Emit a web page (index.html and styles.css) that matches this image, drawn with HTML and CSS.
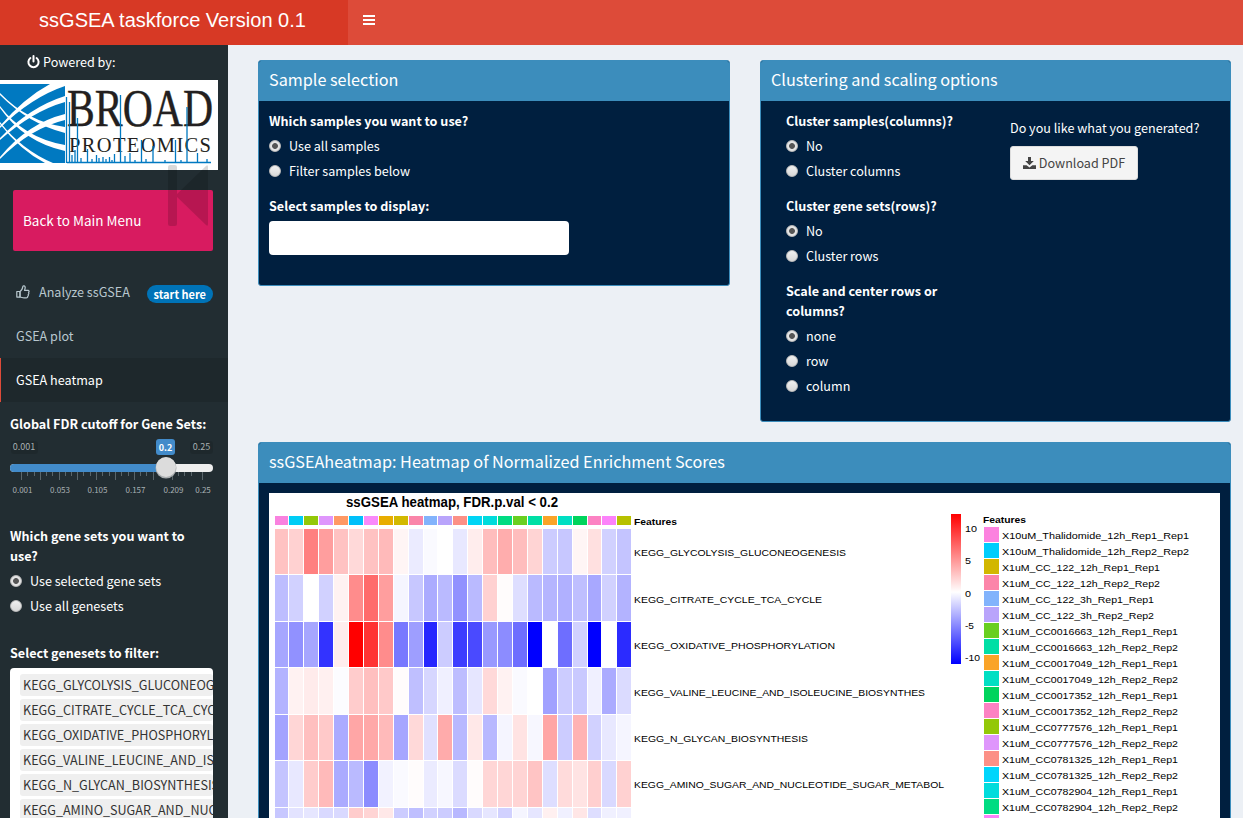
FILE: index.html
```html
<!DOCTYPE html>
<html lang="en">
<head>
<meta charset="utf-8">
<title>ssGSEA taskforce</title>
<link rel="stylesheet" href="styles.css">
</head>
<body>
<header class="header">
  <div class="brand">ssGSEA taskforce Version 0.1</div>
  <nav class="navbar"><svg class="bars" width="12" height="10" viewBox="0 0 12 10"><path d="M0 0h12v2H0zM0 4h12v2H0zM0 8h12v2H0z" fill="#fff"/></svg></nav>
</header>
<div class="shell">
  <aside class="sidebar">
    <div class="powered"><svg width="13" height="14" viewBox="0 0 13 14" fill="none" stroke="#fff" stroke-width="2" stroke-linecap="round"><path d="M3.4 3A5.1 5.1 0 1 0 9.6 3M6.5 1v5.4"/></svg><span>Powered by:</span></div>
    <svg class="logo" width="218" height="90" viewBox="0 0 218 90">
      <rect width="218" height="90" fill="#fff"/>
      <rect y="4" width="65" height="79" fill="#0079c1"/>
      <g fill="#fff">
        <path d="M0 46Q24 18 50 4H65V6Q32 17 0 48z"/>
        <path d="M0 58Q30 27 65 16V22Q33 31 0 60z"/>
        <path d="M0 77Q28 43 65 34V40Q31 48 0 79z"/>
        <path d="M0 13Q28 42 65 47V53Q29 44 0 15z"/>
        <path d="M0 26Q24 58 65 65V71Q24 62 0 28z"/>
        <path d="M0 42Q22 70 53 83H45Q20 70 0 44z"/>
      </g>
      <g font-family="'Liberation Serif', serif" fill="#231f20" stroke="#231f20" stroke-width=".4">
        <text x="67" y="46" font-size="53" textLength="146" lengthAdjust="spacingAndGlyphs">BROAD</text>
        <text x="69" y="72" font-size="20.5" stroke="none" textLength="142" lengthAdjust="spacing">PROTEOMICS</text>
      </g>
      <path d="M67 82.5H211M66.5 17V83M69.5 22V83M77.5 38V83M120.5 15V83M141.5 60V83M153 66V83M175.500 60V83M187 27V83M197.500 73V83M72 75V83M75 70V83M81 78V83M87.500 69V83M92 79V83M96.500 75V83M99 78V83M103 77V83M106 79V83M109.500 77V83M112 80V83M114.500 74V83M125 76V83M130 73V83M135 80V83M146 79V83M165 80V83M181 80V83M207 79V83" stroke="#0079c1" stroke-width="1.300" fill="none"/>
    </svg>
    <div class="back">Back to Main Menu
      <svg class="back-icon" width="40" height="61" viewBox="0 0 40 61"><path d="M0 2q0-2 2-2h5q2 0 2 2v27L38 1q2-2 2 1v57q0 3-2 1L9 32v27q0 2-2 2H2q-2 0-2-2z" fill="#000" fill-opacity=".15"/></svg>
    </div>
    <ul class="menu">
      <li><svg width="14" height="14" viewBox="0 0 14 14" fill="none" stroke="#b8c7ce" stroke-width="1.200" stroke-linejoin="round"><path d="M4 6.500C6 5.500 6.500 3.500 6.900 1.300 7.300.5 9.100.6 9.200 2.400 9.200 3.600 8.700 4.400 8.500 5.400H12c1.200 0 1.500 1.600.5 2.100.6.800.3 1.700-.3 2 .3.700.1 1.500-.5 1.700.1 1-.4 1.700-1.500 1.700H8C6.500 12.900 5.500 12.100 4 12z"/><path d="M.8 6.500H4v5.600H.8z"/></svg><span class="menu-text">Analyze ssGSEA</span><span class="badge">start here</span></li>
      <li>GSEA plot</li>
      <li class="active">GSEA heatmap</li>
    </ul>
    <div class="controls">
      <div class="label">Global FDR cutoff for Gene Sets:</div>
      <svg class="slider" width="203" height="60" viewBox="0 0 203 60">
        <rect x="1" y="5" width="27" height="13" rx="3" fill="#000" fill-opacity=".1"/><rect x="180" y="5" width="23" height="13" rx="3" fill="#000" fill-opacity=".1"/>
        <rect x="0" y="28" width="203" height="8" rx="4" fill="#eee"/>
        <path d="M4 28H156v8H4a4 4 0 0 1 0-8z" fill="#428bca"/>
        <path d="M11.500 36v8M30.500 36v8M49.500 36v8M67.500 36v8M86.500 36v8M105.500 36v8M124.500 36v8M143.500 36v8M162.500 36v8M192.500 36v8" stroke="#5a666b"/>
        <path d="M17.500 36v4M24.500 36v4M36.500 36v4M42.500 36v4M55.500 36v4M61.500 36v4M73.500 36v4M80.500 36v4M92.500 36v4M99.500 36v4M111.500 36v4M118.500 36v4M130.500 36v4M136.500 36v4M149.500 36v4M155.500 36v4M168.500 36v4M174.500 36v4M181.500 36v4" stroke="#5a666b"/>
        <circle cx="156" cy="32" r="10.500" fill="#a9adaf"/><circle cx="156" cy="31" r="10" fill="#dcdcdc"/>
        <rect x="146" y="3" width="19" height="16" rx="3" fill="#428bca"/>
        <g class="slider-text" text-anchor="middle">
          <text x="14" y="14">0.001</text><text x="191.500" y="14">0.25</text>
          <text class="slider-value" x="155.500" y="15">0.2</text>
        </g>
        <g class="slider-scale" text-anchor="middle">
          <text x="12.500" y="57">0.001</text><text x="50" y="57">0.053</text><text x="87.500" y="57">0.105</text><text x="125.500" y="57">0.157</text><text x="163.500" y="57">0.209</text><text x="193" y="57">0.25</text>
        </g>
      </svg>
      <div class="field genes">
        <div class="label">Which gene sets you want to use?</div>
        <label class="radio"><input type="radio" name="gs" checked>Use selected gene sets</label>
        <label class="radio"><input type="radio" name="gs">Use all genesets</label>
      </div>
      <div class="label">Select genesets to filter:</div>
      <div class="multi">
        <div class="item">KEGG_GLYCOLYSIS_GLUCONEOGENESIS</div>
        <div class="item">KEGG_CITRATE_CYCLE_TCA_CYCLE</div>
        <div class="item">KEGG_OXIDATIVE_PHOSPHORYLATION</div>
        <div class="item">KEGG_VALINE_LEUCINE_AND_ISOLEUCINE</div>
        <div class="item">KEGG_N_GLYCAN_BIOSYNTHESIS</div>
        <div class="item">KEGG_AMINO_SUGAR_AND_NUCLEOTIDE</div>
      </div>
    </div>
  </aside>
  <main class="content">
    <div class="row">
      <section class="box">
        <h3>Sample selection</h3>
        <div class="box-body samples">
          <div class="field">
            <div class="label">Which samples you want to use?</div>
            <label class="radio"><input type="radio" name="s" checked>Use all samples</label>
            <label class="radio"><input type="radio" name="s">Filter samples below</label>
          </div>
          <div class="label">Select samples to display:</div>
          <div class="input"></div>
        </div>
      </section>
      <section class="box">
        <h3>Clustering and scaling options</h3>
        <div class="box-body split">
          <div class="options">
            <div class="field">
              <div class="label">Cluster samples(columns)?</div>
              <label class="radio"><input type="radio" name="c" checked>No</label>
              <label class="radio"><input type="radio" name="c">Cluster columns</label>
            </div>
            <div class="field">
              <div class="label">Cluster gene sets(rows)?</div>
              <label class="radio"><input type="radio" name="r" checked>No</label>
              <label class="radio"><input type="radio" name="r">Cluster rows</label>
            </div>
            <div class="field">
              <div class="label">Scale and center rows or columns?</div>
              <label class="radio"><input type="radio" name="z" checked>none</label>
              <label class="radio"><input type="radio" name="z">row</label>
              <label class="radio"><input type="radio" name="z">column</label>
            </div>
          </div>
          <div class="download">
            <div>Do you like what you generated?</div>
            <button class="btn"><svg width="13" height="12" viewBox="0 0 13 12" fill="#444"><path d="M5 0h3v4h2.800L6.500 8.200 2.200 4H5z"/><path d="M0 8.300h3.600L6.500 10.500 9.400 8.300H13V12H0z"/></svg><span>Download PDF</span></button>
          </div>
        </div>
      </section>
    </div>
    <section class="box">
      <h3>ssGSEAheatmap: Heatmap of Normalized Enrichment Scores</h3>
      <div class="box-body"><svg class="plot" id="plot" width="951" height="325" viewBox="269 493 951 325"></svg></div>
    </section>
  </main>
</div>
<script src="heatmap.js"></script>
</body>
</html>
```
FILE: styles.css
```css
* { box-sizing: border-box; }
html, body { height: 818px; overflow: hidden; }
body { margin: 0; background: #ecf0f5; color: #fff; font: 12.6px/20px "Noto Sans CJK JP", "Noto Sans CJK SC", sans-serif; }
.header { display: flex; height: 45px; background: #dd4b39; }
.brand { width: 348px; padding-right: 3px; background: #d73925; font: 20px/40px "Liberation Sans", Arial, sans-serif; text-align: center; }
.navbar { padding: 15px; line-height: 0; }
.shell { display: flex; height: 773px; overflow: hidden; }
.sidebar { width: 228px; flex: none; background: #222d32; overflow: hidden; }
.powered { display: flex; align-items: center; gap: 3px; height: 35px; padding: 0 0 2px 27px; }
.logo { display: block; }
.back { position: relative; width: 200px; height: 61px; margin: 20px 0 19px 13px; padding-left: 10px; border-radius: 2px; background: #d81b60; font-size: 13.500px; line-height: 61px; }
.back-icon { position: absolute; right: 5px; top: -25px; }
.menu { list-style: none; margin: 0; padding: 0; color: #b8c7ce; }
.menu li { display: flex; align-items: center; height: 44px; padding-left: 15px; border-left: 1px solid transparent; }
.menu li.active { background: #1e282c; color: #fff; border-left-color: #dd4b39; }
.menu-text { margin-left: 9px; }
.badge { margin: 3px 15px 0 auto; padding: 0 7px; border-radius: 9px; background: #0073b7; color: #fff; font-size: 11px; line-height: 18px; font-weight: bold; }
.controls { padding: 12px 15px 0 10px; }
.label { font-weight: bold; }
.slider { display: block; margin-top: 2px; }
.slider-text, .slider-scale { fill: #a8b0b3; font-size: 9px; }
.slider-scale { font-size: 8px; }
.slider-value { fill: #fff; font-weight: bold; }
.field { display: flex; flex-direction: column; gap: 5px; margin-bottom: 15px; }
.genes { margin: 30px 0 27px; }
.radio { display: flex; align-items: center; gap: 8px; }
.radio input { appearance: none; width: 12px; height: 12px; margin: 0; border: 1px solid #bbb; border-radius: 50%; background: linear-gradient(#f0f0f0, #d8d8d8); }
.radio input:checked { background: radial-gradient(circle, #555 0 2.500px, #e4e4e4 3.300px); }
.multi { display: flex; flex-direction: column; gap: 3px; height: 200px; margin-top: 5px; padding: 6px 0 0 10px; border-radius: 4px; background: #fff; overflow: hidden; }
.item { flex: none; height: 22px; padding-left: 3px; border-radius: 3px; background: #efefef; color: #333; line-height: 22px; white-space: nowrap; }
.content { flex: 1; padding: 15px 12px 0 30px; }
.row { display: grid; grid-template-columns: 472px 471px; gap: 30px; align-items: start; margin-bottom: 20px; }
.box { border: 1px solid #3c8dbc; border-radius: 3px; background: #001f3f; overflow: hidden; }
.box h3 { margin: 0; height: 40px; padding-left: 10px; background: #3c8dbc; font-size: 16.200px; line-height: 36px; font-weight: normal; }
.box-body { padding: 10px; }
.samples { padding-bottom: 30px; }
.input { width: 300px; height: 34px; margin-top: 5px; border-radius: 4px; background: #fff; }
.split { display: flex; padding-left: 25px; }
.options { width: 172px; margin-right: 52px; }
.download { padding-top: 7px; white-space: nowrap; }
.btn { display: flex; align-items: center; justify-content: center; gap: 3px; width: 128px; height: 34px; margin-top: 8px; padding: 0; border: 1px solid #ddd; border-radius: 3px; background: #f4f4f4; color: #444; font: inherit; }
.plot { display: block; background: #fff; font-family: "Liberation Sans", Arial, sans-serif; font-size: 9.800px; }
.plot-title { font-size: 14px; font-weight: bold; }
.plot-heading { font-weight: bold; }
```
FILE: heatmap.js
```js
const NS = 'http://www.w3.org/2000/svg';
const plot = document.getElementById('plot');

function add(tag, attrs, text, parent = plot) {
  const el = document.createElementNS(NS, tag);
  for (const key in attrs) el.setAttribute(key, attrs[key]);
  if (text !== undefined) el.textContent = text;
  parent.appendChild(el);
  return el;
}
function label(x, y, text, width, cls = '') {
  add('text', { x, y, class: cls, textLength: width, lengthAdjust: 'spacingAndGlyphs' }, text);
}
function rect(x, y, width, height, fill) {
  add('rect', { x, y, width, height, fill });
}
// Positive scores shade to red, negative scores to blue.
function shade(v) {
  const c = Math.round(255 * (1 - Math.abs(v) / 100));
  return v >= 0 ? `rgb(255,${c},${c})` : `rgb(${c},${c},255)`;
}

const colX = [275,289,304,319,334,349,364,379,394,409,424,438,453,468,483,498,513,528,543,558,573,588,602,617,632];
const rowY = [529,575,622,668,715,761,808,854];
const features = ['#f982df','#00cdf5','#93c808','#df96fc','#ff9964','#00c0fa','#f98afa','#e8ad00','#d2b900','#fa85a9','#82b3fc','#b9a4fb','#fc9086','#00d5f5','#00dcdc','#00dc82','#69cf20','#00dfa5','#faa428','#00dfc3','#00d45d','#fc82c3','#fc82fa','#b7c100'];
const scores = [
  [24,18,50,38,24,15,24,27,4,-8,-2,0,-9,7,26,32,26,17,-20,-22,4,12,-18,-23],
  [-26,-18,0,-18,5,45,58,38,-4,-22,-33,-27,-43,-27,18,1,-13,-27,-29,-31,-25,-34,-18,-30],
  [-35,-43,-35,-80,7,100,80,45,-53,-38,-85,-20,-76,-71,-40,-45,-57,-100,0,-57,-18,-100,0,-83],
  [-30,5,8,6,-1,20,25,21,1,-25,-16,-6,-26,-10,15,5,-2,0,-37,-20,-21,-6,-33,-14],
  [-36,16,25,21,-33,35,34,27,-35,15,-12,33,-28,9,-28,-4,11,-3,35,-20,30,-18,-9,-4],
  [-23,-9,20,27,-33,-27,-45,-5,-2,1,-8,-3,-14,1,16,16,17,23,-13,14,11,19,-15,18],
  [-22,-11,-10,-15,-15,20,17,9,-20,-25,-18,-20,-28,-15,-10,-18,-4,-10,6,-6,10,-13,-6,-6]
];

label(346, 507, 'ssGSEA heatmap, FDR.p.val < 0.2', 212, 'plot-title');
features.forEach((color, i) => rect(colX[i], 516, colX[i + 1] - colX[i] - 1, 9, color));
scores.forEach((row, r) => row.forEach((v, c) =>
  rect(colX[c], rowY[r], colX[c + 1] - colX[c] - 1, rowY[r + 1] - rowY[r] - 1, shade(v))));

label(634, 525, 'Features', 43, 'plot-heading');
[
  ['KEGG_GLYCOLYSIS_GLUCONEOGENESIS', 556, 212],
  ['KEGG_CITRATE_CYCLE_TCA_CYCLE', 603, 188],
  ['KEGG_OXIDATIVE_PHOSPHORYLATION', 649, 201],
  ['KEGG_VALINE_LEUCINE_AND_ISOLEUCINE_BIOSYNTHES', 696, 291],
  ['KEGG_N_GLYCAN_BIOSYNTHESIS', 742, 174],
  ['KEGG_AMINO_SUGAR_AND_NUCLEOTIDE_SUGAR_METABOL', 788, 310]
].forEach(([name, y, w]) => label(634, y, name, w));

const defs = add('defs', {});
const scale = add('linearGradient', { id: 'scale', x1: 0, y1: 0, x2: 0, y2: 1 }, undefined, defs);
[[0, '#f00'], [0.52, '#fff'], [1, '#00f']].forEach(([offset, color]) =>
  add('stop', { offset, 'stop-color': color }, undefined, scale));
rect(951, 514, 10, 150, 'url(#scale)');
[['10', 965, 532, 12], ['5', 965, 564, 6], ['0', 965, 597, 6], ['-5', 965, 629, 9], ['-10', 965, 661, 15]]
  .forEach(([t, x, y, w]) => label(x, y, t, w));

label(983, 523, 'Features', 43, 'plot-heading');
[
  ['X10uM_Thalidomide_12h_Rep1_Rep1', '#fc82df', 187],
  ['X10uM_Thalidomide_12h_Rep2_Rep2', '#00cdfc', 187],
  ['X1uM_CC_122_12h_Rep1_Rep1', '#d2b700', 158],
  ['X1uM_CC_122_12h_Rep2_Rep2', '#fc85a9', 158],
  ['X1uM_CC_122_3h_Rep1_Rep1', '#82b3fc', 152],
  ['X1uM_CC_122_3h_Rep2_Rep2', '#b9a4fb', 152],
  ['X1uM_CC0016663_12h_Rep1_Rep1', '#69cf20', 176],
  ['X1uM_CC0016663_12h_Rep2_Rep2', '#00dfa5', 176],
  ['X1uM_CC0017049_12h_Rep1_Rep1', '#faa428', 176],
  ['X1uM_CC0017049_12h_Rep2_Rep2', '#00dfc3', 176],
  ['X1uM_CC0017352_12h_Rep1_Rep1', '#00d45d', 176],
  ['X1uM_CC0017352_12h_Rep2_Rep2', '#fc82c3', 176],
  ['X1uM_CC0777576_12h_Rep1_Rep1', '#93c808', 176],
  ['X1uM_CC0777576_12h_Rep2_Rep2', '#df96fc', 176],
  ['X1uM_CC0781325_12h_Rep1_Rep1', '#fc9086', 176],
  ['X1uM_CC0781325_12h_Rep2_Rep2', '#00d5fc', 176],
  ['X1uM_CC0782904_12h_Rep1_Rep1', '#00dcdc', 176],
  ['X1uM_CC0782904_12h_Rep2_Rep2', '#00dc82', 176],
  ['', '#fc82fa', 0]
].forEach(([name, color, w], i) => {
  rect(984, 527 + 16 * i, 15, 15, color);
  if (name) label(1002, 539 + 16 * i, name, w);
});
```
